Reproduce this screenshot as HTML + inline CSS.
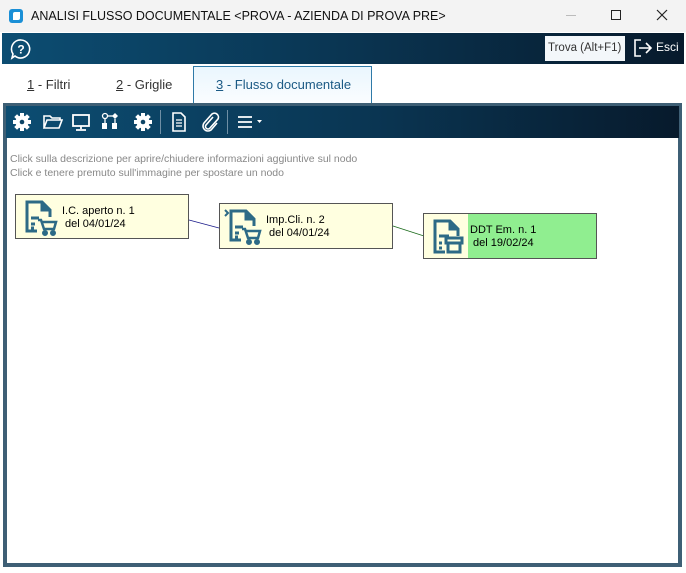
<!DOCTYPE html>
<html><head><style>
*{margin:0;padding:0;box-sizing:border-box}
body{width:686px;height:573px;background:#fff;font-family:"Liberation Sans",sans-serif;position:relative;overflow:hidden}
.abs{position:absolute}
.title{left:0;top:0;width:686px;height:32px;background:#f3f3f3;font-size:12.5px;color:#111}
.hdr{left:2px;top:33px;width:682px;height:31px;background:linear-gradient(90deg,#0c4d72 0%,#0a3552 50%,#071a2c 100%)}
.tb{left:6px;top:106px;width:673px;height:32px;background:linear-gradient(90deg,#0c4d72 0%,#0a3552 55%,#071a2c 100%)}
.frame{left:3px;top:103px;width:679px;height:464px;border:3px solid #3e5f75;background:#fff}
.inner{left:6px;top:138px;width:673px;height:426px;border:1px solid #3e5f75;border-top:none}
.node{position:absolute;border:1px solid #555;background:#ffffe0;font-size:11px;color:#000;line-height:13px}
.node .t{position:absolute;left:46px;top:10px;white-space:pre}
svg{display:block}
</style></head><body>
<div class="abs title">
 <div class="abs" style="left:9px;top:9px;width:14px;height:14px;background:#1a8fd6;border-radius:3px"><div style="margin:3px 0 0 4px;width:7px;height:8px;background:#fff;border-radius:2px 0 2px 0"></div></div>
 <div class="abs" style="left:31px;top:9px">ANALISI FLUSSO DOCUMENTALE &lt;PROVA - AZIENDA DI PROVA PRE&gt;</div>
 <div class="abs" style="left:566px;top:15px;width:10px;height:1px;background:#bbb"></div>
 <div class="abs" style="left:611px;top:10px;width:10px;height:10px;border:1px solid #222"></div>
 <svg class="abs" style="left:656px;top:9px" width="12" height="12"><path d="M1 1L11 11M11 1L1 11" stroke="#222" stroke-width="1.2"/></svg>
</div>
<div class="abs hdr">
 <svg class="abs" style="left:8px;top:5px" width="22" height="22" viewBox="0 0 22 22"><path d="M11 2a9 9 0 1 1 -6 16l-3 2 1-4A9 9 0 0 1 11 2z" fill="none" stroke="#fff" stroke-width="1.6"/><text x="11" y="15.5" font-size="12" fill="#fff" text-anchor="middle" font-family="Liberation Sans" font-weight="bold">?</text></svg>
 <div class="abs" style="left:543px;top:3px;width:80px;height:25px;background:#f3f7fa;font-size:11.5px;color:#333;padding:6px 0 0 3px">Trova (Alt+F1)</div>
 <svg class="abs" style="left:630px;top:4px" width="22" height="22" viewBox="0 0 22 22"><path d="M9 3H3v16h6" fill="none" stroke="#fff" stroke-width="1.6"/><path d="M7 11h12M14 6l5 5-5 5" fill="none" stroke="#fff" stroke-width="1.6"/></svg>
 <div class="abs" style="left:654px;top:7px;font-size:12px;color:#fff">Esci</div>
</div>
<div class="abs" style="left:27px;top:77px;font-size:13px;color:#333"><u>1</u> - Filtri</div>
<div class="abs" style="left:116px;top:77px;font-size:13px;color:#333"><u>2</u> - Griglie</div>
<div class="abs" style="left:193px;top:66px;width:179px;height:37px;border:1px solid #2f7aa8;border-bottom:none;background:linear-gradient(#eaf6fe,#fafdff);font-size:13px;color:#1b5a85;padding:10px 0 0 22px"><u>3</u> - Flusso documentale</div>
<div class="abs frame"></div>
<div class="abs tb">
 <svg width="673" height="32" viewBox="0 0 673 32" fill="#fff">
  <g transform="translate(16,16)"><circle r="6.5"/><g><rect x="-2" y="-9" width="4" height="18"/><rect x="-9" y="-2" width="18" height="4"/><rect x="-2" y="-9" width="4" height="18" transform="rotate(45)"/><rect x="-2" y="-9" width="4" height="18" transform="rotate(-45)"/></g><circle r="2.3" fill="#0b4466"/></g>
  <path d="M38 10h6l2 2h8v2H41l-3 8z M38 22l3-8h15l-3 8z" fill="none" stroke="#fff" stroke-width="1.6"/>
  <rect x="67" y="9" width="16" height="11" fill="none" stroke="#fff" stroke-width="1.8"/><path d="M75 20v3M70 24h10" stroke="#fff" stroke-width="1.8"/>
  <circle cx="99" cy="10" r="2.5" fill="none" stroke="#fff" stroke-width="1.3"/><path d="M102 10h5" stroke="#fff" stroke-width="1.3"/><path d="M109 7l3 3-3 3-3-3z"/><path d="M99 13v4M109 13v4" stroke="#fff" stroke-width="1.3"/><rect x="96" y="17" width="5" height="6"/><rect x="106" y="17" width="5" height="6"/>
  <g transform="translate(137,16)"><circle r="6.5"/><rect x="-2" y="-9" width="4" height="18"/><rect x="-9" y="-2" width="18" height="4"/><rect x="-2" y="-9" width="4" height="18" transform="rotate(45)"/><rect x="-2" y="-9" width="4" height="18" transform="rotate(-45)"/><circle r="2.3" fill="#0b4466"/></g>
  <rect x="154" y="4" width="1" height="24" fill="#6f8fa5"/>
  <path d="M167 7h8l4 4v14h-12z" fill="none" stroke="#fff" stroke-width="1.6"/><path d="M170 14h6M170 17h6M170 20h6" stroke="#fff" stroke-width="1.3"/>
  <path d="M207 11l-7 8a2.5 2.5 0 0 0 4 3l8-9a4 4 0 0 0-6-5l-8 9a5 5 0 0 0 7 7l6-7" fill="none" stroke="#fff" stroke-width="1.6"/>
  <rect x="221" y="4" width="1" height="24" fill="#6f8fa5"/>
  <path d="M232 11h14M232 16h14M232 21h14" stroke="#fff" stroke-width="1.8"/><path d="M251 14h5l-2.5 3z"/>
 </svg>
</div>
<div class="abs inner"></div>
<div class="abs" style="left:10px;top:153px;font-size:10.5px;color:#888;line-height:13.5px">Click sulla descrizione per aprire/chiudere informazioni aggiuntive sul nodo<br>Click e tenere premuto sull'immagine per spostare un nodo</div>
<svg class="abs" style="left:0;top:0" width="686" height="573"><path d="M189 220L219 228" stroke="#1a1a8a" stroke-width="0.8"/><path d="M393 226L424 236" stroke="#1a6a1a" stroke-width="0.8"/></svg>
<div class="node" style="left:15px;top:194px;width:174px;height:45px">
 <svg class="abs" style="left:4px;top:3px" width="40" height="40" viewBox="0 0 40 40" fill="none" stroke="#2d6a86" stroke-width="3"><path d="M17 33H7V4h15l8 8v7"/><path d="M22 4v8h8" fill="#2d6a86"/><path d="M11 20h8M11 26h4M11 30h3"/><path d="M18 22h3l3 9h10l2-7H22" stroke-width="2.5"/><circle cx="25" cy="35" r="1.5" fill="#2d6a86"/><circle cx="33" cy="35" r="1.5" fill="#2d6a86"/></svg>
 <div class="t">I.C. aperto n. 1
 del 04/01/24</div></div>
<div class="node" style="left:219px;top:203px;width:174px;height:46px">
 <svg class="abs" style="left:4px;top:3px" width="40" height="40" viewBox="0 0 40 40" fill="none" stroke="#2d6a86" stroke-width="3"><path d="M1 3l3 3-3 3" stroke-width="2"/><path d="M17 33H7V4h15l8 8v7"/><path d="M22 4v8h8" fill="#2d6a86"/><path d="M11 20h8M11 26h4M11 30h3"/><path d="M18 22h3l3 9h10l2-7H22" stroke-width="2.5"/><circle cx="25" cy="35" r="1.5" fill="#2d6a86"/><circle cx="33" cy="35" r="1.5" fill="#2d6a86"/></svg>
 <div class="t">Imp.Cli. n. 2
 del 04/01/24</div></div>
<div class="node" style="left:423px;top:213px;width:174px;height:46px;background:linear-gradient(90deg,#ffffe0 0,#ffffe0 44px,#90ee90 44px)">
 <svg class="abs" style="left:4px;top:3px" width="40" height="40" viewBox="0 0 40 40" fill="none" stroke="#2d6a86" stroke-width="3"><path d="M17 35H7V4h15l8 8v7"/><path d="M22 4v8h8" fill="#2d6a86"/><path d="M11 19h10M11 26h3M11 31h3"/><rect x="18" y="21" width="16" height="5"/><rect x="20" y="26" width="12" height="9"/></svg>
 <div class="t">DDT Em. n. 1
 del 19/02/24</div></div>
</body></html>
